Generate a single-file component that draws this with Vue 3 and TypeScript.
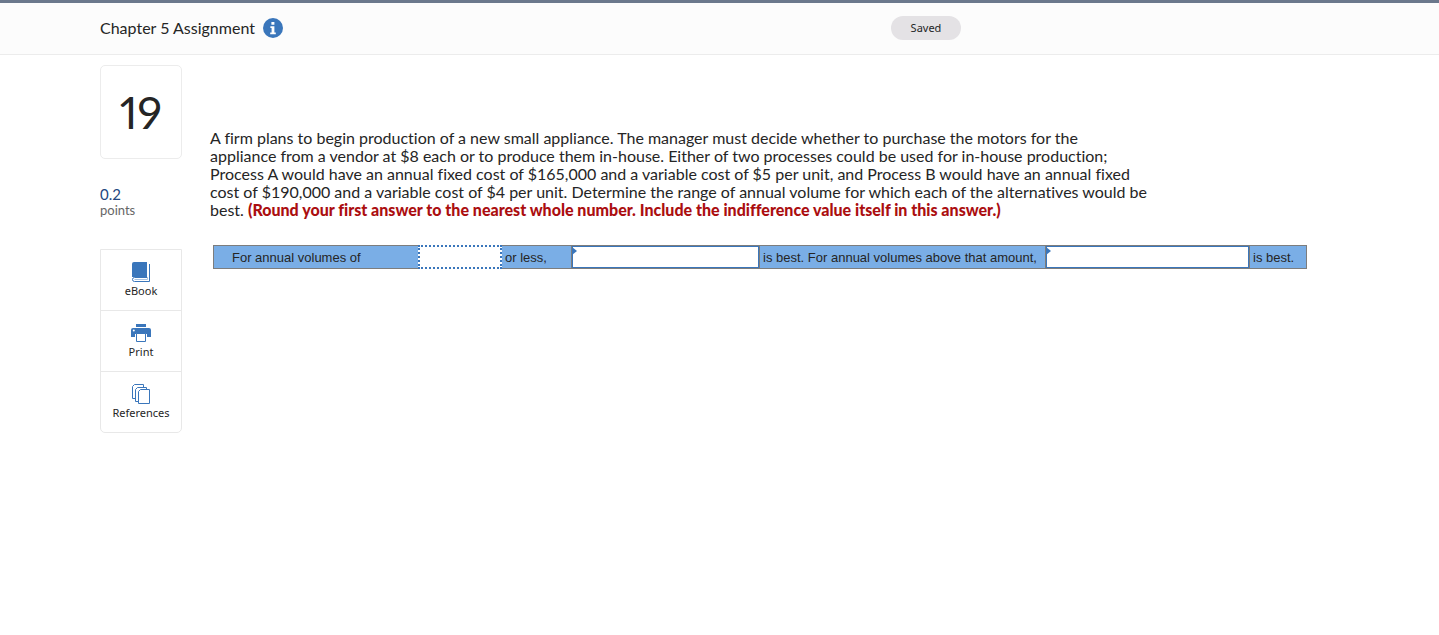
<script setup lang="ts">
import { ref } from 'vue'

const volume = ref('')
const lowChoice = ref('')
const highChoice = ref('')
const choices: string[] = ['Process A', 'Process B', 'Vendor']
</script>

<template>
  <div class="page">
    <header class="topbar">
      <div class="title-group">
        <h1 class="title">Chapter 5 Assignment</h1>
        <button class="info" type="button" aria-label="Assignment information">
          <svg width="20" height="20" viewBox="0 0 20 20" aria-hidden="true">
            <circle cx="10" cy="10" r="10" fill="#3a76bb" />
            <path d="M8.4 4h3v2.8h-3zM7.4 8.2h4v6.2h1.4v1.8H7.2v-1.8h1.4V10H7.4z" fill="#fff" />
          </svg>
        </button>
      </div>
      <div class="status"><span class="saved" role="status">Saved</span></div>
    </header>

    <div class="body">
      <aside class="side">
        <div class="number">19</div>
        <div class="points">
          <span class="points-value">0.2</span>
          <span class="points-label">points</span>
        </div>
        <nav class="tools" aria-label="Question tools">
          <button class="tool" type="button">
            <svg width="20" height="20" viewBox="0 0 20 20" aria-hidden="true">
              <path d="M3 0h13v15H1V2Q1 0 3 0z" fill="#3a76bb" />
              <path d="M16 15.500H3.500Q1.500 15.500 1.500 17.500T3.500 19.500H18.500V2" fill="none" stroke="#3a76bb" />
              <path d="M3.500 17.500H16.500V15" fill="none" stroke="#a9c3e2" />
            </svg>
            <span>eBook</span>
          </button>
          <button class="tool" type="button">
            <svg width="20" height="20" viewBox="0 0 20 20" aria-hidden="true">
              <path d="M5 1h10v3H5zM2 5h16q2 0 2 2v7h-4v-3H4v3H0V7q0-2 2-2z" fill="#3a76bb" />
              <path d="M5.500 10.500h9v8h-9z" fill="#fff" stroke="#3a76bb" />
              <circle cx="2.800" cy="7.500" r="1" fill="#fff" />
            </svg>
            <span>Print</span>
          </button>
          <button class="tool" type="button">
            <svg width="20" height="20" viewBox="0 0 20 20" aria-hidden="true" fill="#fff" stroke="#3a76bb">
              <path d="M1.500 2.500l2-2h9v14h-11z" />
              <path d="M4.500 5.500l2-2h9v14h-11z" />
              <path d="M7.500 7.500l2-2h9v14h-11z" />
            </svg>
            <span>References</span>
          </button>
        </nav>
      </aside>

      <main class="question">
        <p class="prompt">
          A firm plans to begin production of a new small appliance. The manager must decide whether to purchase the motors for the<br />
          appliance from a vendor at $8 each or to produce them in-house. Either of two processes could be used for in-house production;<br />
          Process A would have an annual fixed cost of $165,000 and a variable cost of $5 per unit, and Process B would have an annual fixed<br />
          cost of $190,000 and a variable cost of $4 per unit. Determine the range of annual volume for which each of the alternatives would be<br />
          best. <strong>(Round your first answer to the nearest whole number. Include the indifference value itself in this answer.)</strong>
        </p>
        <form class="answer" @submit.prevent>
          <label class="phrase lead" for="volume">For annual volumes of</label>
          <input id="volume" v-model="volume" class="volume" type="text" />
          <label class="phrase less" for="low">or less,</label>
          <div class="pick pick-low">
            <select id="low" v-model="lowChoice">
              <option value=""></option>
              <option v-for="c in choices" :key="c">{{ c }}</option>
            </select>
          </div>
          <label class="phrase middle" for="high">is best. For annual volumes above that amount,</label>
          <div class="pick pick-high">
            <select id="high" v-model="highChoice">
              <option value=""></option>
              <option v-for="c in choices" :key="c">{{ c }}</option>
            </select>
          </div>
          <span class="phrase last">is best.</span>
        </form>
      </main>
    </div>
  </div>
</template>

<style>
body {
  background: #fff;
}
</style>

<style scoped>
.page {
  font-family: Lato, "Open Sans", sans-serif;
  font-variant-ligatures: none;
  color: #252525;
}
.page * {
  box-sizing: border-box;
}
.topbar {
  display: grid;
  grid-template-columns: 1fr 548px;
  align-items: center;
  height: 55px;
  padding: 0 0 2px 100px;
  border-top: 3px solid #6b788c;
  border-bottom: 1px solid #ececec;
  background: #fcfcfc;
}
.title-group {
  display: flex;
  align-items: center;
  gap: 8px;
}
.title {
  margin: 0;
  font-size: 16px;
  font-weight: 400;
  line-height: 20px;
}
.info {
  display: flex;
  padding: 0;
  border: 0;
  background: none;
}
.status {
  display: flex;
}
.saved {
  width: 70px;
  border-radius: 12px;
  background: #e4e2e5;
  font-family: "Noto Sans", sans-serif;
  font-size: 11px;
  line-height: 24px;
  text-align: center;
}
.body {
  display: flex;
  gap: 28px;
  padding: 10px 132px 0 100px;
}
.side {
  flex: 0 0 82px;
}
.number {
  height: 94px;
  border: 1px solid #ececec;
  border-radius: 5px;
  font-size: 45px;
  font-variant-numeric: proportional-nums;
  line-height: 92px;
  text-align: center;
}
.points {
  display: flex;
  flex-direction: column;
  margin-top: 26px;
}
.points-value {
  color: #24477f;
  font-size: 15px;
  line-height: 18px;
}
.points-label {
  color: #666;
  font-size: 13px;
  line-height: 15px;
}
.tools {
  margin-top: 31px;
  border: 1px solid #e8e8e8;
  border-radius: 0 0 5px 5px;
}
.tool {
  display: flex;
  flex-direction: column;
  align-items: center;
  width: 100%;
  height: 60px;
  padding: 12px 0 0;
  border: 0;
  background: none;
  color: #252525;
  font-family: "Noto Sans", sans-serif;
  font-size: 11px;
  line-height: 18px;
}
.tool + .tool {
  height: 61px;
  border-top: 1px solid #e8e8e8;
}
.question {
  flex: 1;
  min-width: 0;
  padding-top: 64px;
}
.prompt {
  margin: 0;
  font-size: 16px;
  line-height: 18px;
}
.prompt strong {
  color: #ab0e10;
  font-weight: 900;
}
.answer {
  display: flex;
  height: 24px;
  margin: 26px 0 0 3px;
  border: 1px solid #7d7d7d;
  background: #7aaee6;
  font-family: "Liberation Sans", Arial, sans-serif;
  font-size: 13px;
}
.phrase {
  line-height: 24px;
  white-space: nowrap;
  padding-left: 3px;
}
.lead {
  flex: 0 0 204px;
  padding-left: 18px;
}
.volume {
  flex: 0 0 84px;
  width: 84px;
  margin: -1px 0;
  padding: 0 4px;
  border: 2px dotted #3a76bb;
  border-radius: 0;
  background: #fff;
  font: inherit;
}
.less {
  flex: 0 0 69px;
}
.middle {
  flex: 0 0 285px;
}
.last {
  flex: 0 0 56px;
}
.pick {
  position: relative;
  border-left: 1px solid #7d7d7d;
  border-right: 1px solid #7d7d7d;
}
.pick-low {
  flex: 188 1 0;
}
.pick-high {
  flex: 204 1 0;
}
.pick select {
  display: block;
  width: 100%;
  height: 22px;
  padding: 0 8px;
  border: 1px solid #3a76bb;
  border-radius: 0;
  appearance: none;
  background: #fff;
  font: inherit;
}
.pick::before {
  content: "";
  position: absolute;
  top: 1px;
  left: 0;
  border: 4px solid transparent;
  border-left: 5px solid #3a76bb;
  border-right: 0;
  pointer-events: none;
}
</style>
